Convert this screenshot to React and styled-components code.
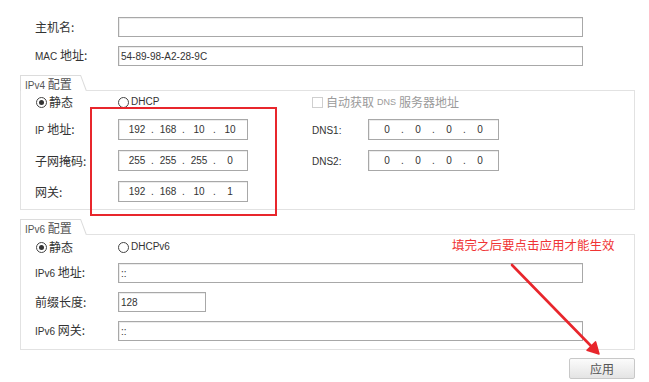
import React from 'react';
import styled, { createGlobalStyle } from 'styled-components';

const Global = createGlobalStyle`
  html, body { margin: 0; padding: 0; background: #fff; }
  body { font-family: "Noto Sans CJK SC", sans-serif; color: #333; }
`;

const Page = styled.div`
  position: relative;
  width: 649px;
  height: 382px;
  overflow: hidden;
  box-sizing: border-box;
  padding: 17px 14px 0 20px;
  font-size: 12px;
  background: #fff;
`;

const Lat = styled.span`
  font-family: "Liberation Sans", Arial, sans-serif;
  font-size: ${(p) => p.$size || 10}px;
`;

const TopRow = styled.div`
  display: grid;
  grid-template-columns: 83px 465px;
  align-items: center;
  height: 20px;
  padding-left: 15px;
  margin-bottom: 9px;
  &:last-of-type { margin-bottom: 0; }
`;

const Label = styled.div`
  font-size: 12px;
  line-height: 16px;
  white-space: nowrap;
  color: #333;
`;

const TextBox = styled.div`
  box-sizing: border-box;
  width: ${(p) => p.$w}px;
  height: ${(p) => p.$h || 20}px;
  border: 1px solid #a8a8a8;
  box-shadow: inset 1px 1px 0 #ececec;
  background: #fff;
  display: flex;
  align-items: center;
  padding-left: 2px;
  font-family: "Liberation Sans", Arial, sans-serif;
  font-size: 10px;
  color: #333;
`;

const IpBox = styled.div`
  box-sizing: border-box;
  width: ${(p) => p.$w}px;
  height: 21px;
  border: 1px solid #a8a8a8;
  box-shadow: inset 1px 1px 0 #ececec;
  display: grid;
  grid-template-columns: 24px 7px 24px 7px 24px 7px 24px;
  align-items: center;
  padding-left: 6px;
  font-family: "Liberation Sans", Arial, sans-serif;
  font-size: 10px;
  color: #333;
`;

const Octet = styled.span`
  text-align: center;
`;

const Dot = styled.span`
  text-align: center;
`;

const Group = styled.div`
  margin-top: ${(p) => p.$mt}px;
  width: 615px;
`;

const GroupHead = styled.div`
  display: flex;
  align-items: flex-end;
  height: 16px;
`;

const Tab = styled.div`
  box-sizing: border-box;
  width: 67px;
  height: 16px;
  padding: 1px 0 0 1px;
  background: #dcdcdc;
  clip-path: polygon(0 0, 61px 0, 67px 16px, 0 16px);
`;

const TabFace = styled.div`
  box-sizing: border-box;
  height: 15px;
  background: #fff;
  clip-path: polygon(0 0, 59.3px 0, 64.9px 15px, 0 15px);
  padding-left: 4px;
  font-size: 12px;
  line-height: 15px;
  color: #555;
  white-space: nowrap;
`;

const HeadLine = styled.div`
  flex: 1;
  height: 1px;
  background: #e2e2e2;
`;

const GroupBody = styled.div`
  border: 1px solid #e2e2e2;
  border-top: none;
  padding: ${(p) => p.$pt}px 0 ${(p) => p.$pb}px 14px;
  display: grid;
  grid-template-columns: ${(p) => p.$cols};
  grid-template-rows: ${(p) => p.$rows};
  row-gap: ${(p) => p.$gap}px;
  align-items: center;
`;

const Radio = styled.div`
  display: inline-flex;
  align-items: center;
  gap: 2px;
  margin-left: ${(p) => p.$ml || 0}px;
  white-space: nowrap;
  font-size: 12px;
  line-height: 14px;
  color: #333;
`;

const RadioCircle = styled.span`
  box-sizing: border-box;
  width: 11px;
  height: 11px;
  border-radius: 50%;
  border: 1px solid #444;
  background: #fff;
  display: inline-flex;
  align-items: center;
  justify-content: center;
  &::after {
    content: '';
    width: 5px;
    height: 5px;
    border-radius: 50%;
    background: ${(p) => (p.$on ? '#333' : 'transparent')};
  }
`;

const Check = styled.div`
  grid-column: span 2;
  display: inline-flex;
  align-items: center;
  gap: 3px;
  color: #9a9a9a;
  font-size: 12px;
  line-height: 14px;
  white-space: nowrap;
`;

const CheckBox = styled.span`
  box-sizing: border-box;
  width: 11px;
  height: 11px;
  border: 1px solid #cfcfcf;
  background: #fff;
`;

const Empty = styled.span``;

const ButtonRow = styled.div`
  width: 615px;
  display: flex;
  justify-content: flex-end;
  margin-top: 8px;
`;

const Button = styled.div`
  box-sizing: border-box;
  width: 66px;
  height: 21px;
  border: 1px solid #c8c8c8;
  border-radius: 2px;
  background: linear-gradient(#fbfbfb, #e4e4e4);
  display: flex;
  align-items: center;
  justify-content: center;
  font-size: 12px;
  color: #555;
`;

const RedBox = styled.div`
  position: absolute;
  left: 90px;
  top: 107px;
  width: 187px;
  height: 109px;
  box-sizing: border-box;
  border: 2px solid #e8262c;
  pointer-events: none;
`;

const Note = styled.div`
  position: absolute;
  left: 452px;
  top: 236px;
  font-size: 12.5px;
  line-height: 18px;
  color: #f03434;
  white-space: nowrap;
`;

const ArrowSvg = styled.svg`
  position: absolute;
  left: 0;
  top: 0;
  pointer-events: none;
`;

const Ip = ({ w, parts }) => (
  <IpBox $w={w}>
    <Octet>{parts[0]}</Octet>
    <Dot>.</Dot>
    <Octet>{parts[1]}</Octet>
    <Dot>.</Dot>
    <Octet>{parts[2]}</Octet>
    <Dot>.</Dot>
    <Octet>{parts[3]}</Octet>
  </IpBox>
);

export default function App() {
  return (
    <>
      <Global />
      <Page>
        <TopRow>
          <Label>主机名:</Label>
          <TextBox $w={465} />
        </TopRow>
        <TopRow>
          <Label><Lat>MAC</Lat> 地址:</Label>
          <TextBox $w={465}>54-89-98-A2-28-9C</TextBox>
        </TopRow>

        <Group $mt={9}>
          <GroupHead>
            <Tab><TabFace><Lat>IPv4</Lat> 配置</TabFace></Tab>
            <HeadLine />
          </GroupHead>
          <GroupBody
            $pt={4}
            $pb={7}
            $gap={10}
            $cols="83px 130px 64px 56px 131px"
            $rows="14px 21px 21px 21px"
          >
            <Radio $ml={1}><RadioCircle $on />静态</Radio>
            <Radio><RadioCircle /><Lat>DHCP</Lat></Radio>
            <Empty />
            <Check><CheckBox />自动获取 <Lat $size={9}>DNS</Lat> 服务器地址</Check>

            <Label><Lat>IP</Lat> 地址:</Label>
            <Ip w={130} parts={['192', '168', '10', '10']} />
            <Empty />
            <Label><Lat>DNS1:</Lat></Label>
            <Ip w={131} parts={['0', '0', '0', '0']} />

            <Label>子网掩码:</Label>
            <Ip w={130} parts={['255', '255', '255', '0']} />
            <Empty />
            <Label><Lat>DNS2:</Lat></Label>
            <Ip w={131} parts={['0', '0', '0', '0']} />

            <Label>网关:</Label>
            <Ip w={130} parts={['192', '168', '10', '1']} />
          </GroupBody>
        </Group>

        <Group $mt={9}>
          <GroupHead>
            <Tab><TabFace><Lat>IPv6</Lat> 配置</TabFace></Tab>
            <HeadLine />
          </GroupHead>
          <GroupBody
            $pt={5}
            $pb={8}
            $gap={9}
            $cols="83px 465px"
            $rows="14px 20px 20px 20px"
          >
            <Radio $ml={1}><RadioCircle $on />静态</Radio>
            <Radio><RadioCircle /><Lat>DHCPv6</Lat></Radio>

            <Label><Lat>IPv6</Lat> 地址:</Label>
            <TextBox $w={465}>::</TextBox>

            <Label>前缀长度:</Label>
            <TextBox $w={88}>128</TextBox>

            <Label><Lat>IPv6</Lat> 网关:</Label>
            <TextBox $w={465}>::</TextBox>
          </GroupBody>
        </Group>

        <ButtonRow>
          <Button>应用</Button>
        </ButtonRow>

        <RedBox />
        <Note>填完之后要点击应用才能生效</Note>
        <ArrowSvg width="649" height="382" viewBox="0 0 649 382">
          <line x1="512" y1="265" x2="592" y2="347" stroke="#e8262c" strokeWidth="2.6" strokeLinecap="round" />
          <polygon points="599,354 587,350.3 595.6,341.9" fill="#e8262c" stroke="#e8262c" strokeWidth="1.5" strokeLinejoin="round" />
        </ArrowSvg>
      </Page>
    </>
  );
}
